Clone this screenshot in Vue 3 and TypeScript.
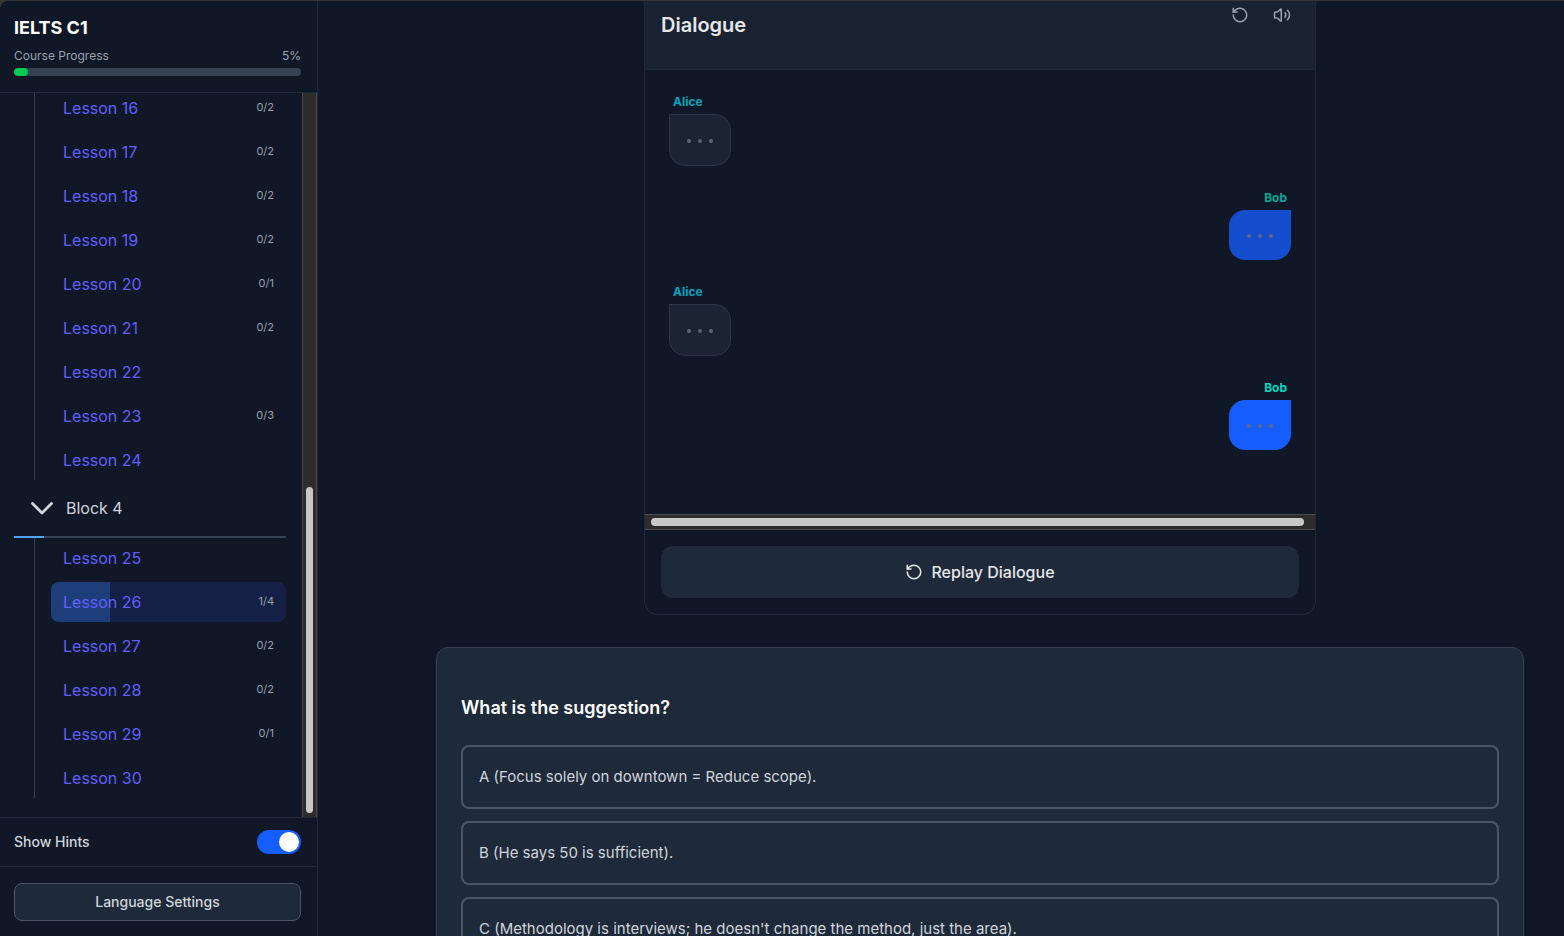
<script setup lang="ts">
import { ref } from 'vue'

interface Lesson {
  id: number
  count?: string
  progress?: number
}

interface Message {
  speaker: string
  own: boolean
  tone: string
}

const previousLessons: Lesson[] = [
  { id: 16, count: '0/2' },
  { id: 17, count: '0/2' },
  { id: 18, count: '0/2' },
  { id: 19, count: '0/2' },
  { id: 20, count: '0/1' },
  { id: 21, count: '0/2' },
  { id: 22 },
  { id: 23, count: '0/3' },
  { id: 24 },
]

const blockLessons: Lesson[] = [
  { id: 25 },
  { id: 26, count: '1/4', progress: 25 },
  { id: 27, count: '0/2' },
  { id: 28, count: '0/2' },
  { id: 29, count: '0/1' },
  { id: 30 },
]

const messages: Message[] = [
  { speaker: 'Alice', own: false, tone: 'alice' },
  { speaker: 'Bob', own: true, tone: 'bob muted' },
  { speaker: 'Alice', own: false, tone: 'alice' },
  { speaker: 'Bob', own: true, tone: 'bob' },
]

const options: string[] = [
  'A (Focus solely on downtown = Reduce scope).',
  'B (He says 50 is sufficient).',
  "C (Methodology is interviews; he doesn't change the method, just the area).",
]

const courseProgress = ref(5)
const blockProgress = ref(11)
const showHints = ref(true)
const open = ref(true)
</script>

<template>
  <div class="app">
    <aside class="sidebar">
      <header class="course">
        <h1>IELTS C1</h1>
        <div class="course-row">
          <span>Course Progress</span>
          <span>{{ courseProgress }}%</span>
        </div>
        <div class="course-track">
          <div class="course-fill" :style="{ width: courseProgress + '%' }"></div>
        </div>
      </header>

      <div class="list-area">
        <nav class="list" aria-label="Lessons">
          <div class="list-inner">
            <div class="group">
              <a v-for="l in previousLessons" :key="l.id" href="#" class="lesson">
                <span class="lesson-name">Lesson {{ l.id }}</span>
                <span v-if="l.count" class="count">{{ l.count }}</span>
              </a>
            </div>
            <button type="button" class="block" :aria-expanded="open" @click="open = !open">
              <svg width="24" height="24" viewBox="0 0 24 24" fill="none" stroke="currentColor" stroke-width="2.8" stroke-linecap="round" stroke-linejoin="round">
                <path d="M2.500 7.500 12 17l9.500-9.500" />
              </svg>
              <span>Block 4</span>
            </button>
            <div class="block-track">
              <div class="block-fill" :style="{ width: blockProgress + '%' }"></div>
            </div>
            <div v-show="open" class="group">
              <a v-for="l in blockLessons" :key="l.id" href="#" class="lesson" :class="{ current: l.progress }">
                <span v-if="l.progress" class="lesson-fill" :style="{ width: l.progress + '%' }"></span>
                <span class="lesson-name">Lesson {{ l.id }}</span>
                <span v-if="l.count" class="count">{{ l.count }}</span>
              </a>
            </div>
          </div>
        </nav>
        <div class="v-track"><div class="v-space"></div><div class="v-thumb"></div></div>
      </div>

      <div class="hints">
        <label for="hints">Show Hints</label>
        <input id="hints" v-model="showHints" type="checkbox" role="switch" class="switch" />
      </div>
      <div class="language">
        <button type="button" class="language-button">Language Settings</button>
      </div>
    </aside>

    <main class="main">
      <section class="dialogue">
        <header class="dialogue-head">
          <h2>Dialogue</h2>
          <div class="tools">
            <button type="button" class="tool" aria-label="Replay">
              <svg width="18" height="18" viewBox="0 0 24 24" fill="none" stroke="currentColor" stroke-width="2" stroke-linecap="round" stroke-linejoin="round">
                <path d="M3 12a9 9 0 1 0 9-9 9.75 9.75 0 0 0-6.74 2.74L3 8" />
                <path d="M3 3v5h5" />
              </svg>
            </button>
            <button type="button" class="tool" aria-label="Sound">
              <svg width="18" height="18" viewBox="0 0 24 24" fill="none" stroke="currentColor" stroke-width="2" stroke-linecap="round" stroke-linejoin="round">
                <path d="M11 4.7a.7.7 0 0 0-1.2-.5L6.4 7.6A1.4 1.4 0 0 1 5.4 8H3a1 1 0 0 0-1 1v6a1 1 0 0 0 1 1h2.4a1.4 1.4 0 0 1 1 .4l3.4 3.4a.7.7 0 0 0 1.2-.5z" />
                <path d="M16 9a5 5 0 0 1 0 6" />
                <path d="M19.4 18.400a9 9 0 0 0 0-12.700" />
              </svg>
            </button>
          </div>
        </header>
        <div class="messages">
          <div v-for="(m, i) in messages" :key="i" class="message" :class="[m.tone, { own: m.own }]">
            <span class="speaker">{{ m.speaker }}</span>
            <div class="bubble"><i></i><i></i><i></i></div>
          </div>
        </div>
        <div class="h-track"><div class="h-thumb"></div></div>
        <footer class="dialogue-foot">
          <button type="button" class="replay">
            <svg width="18" height="18" viewBox="0 0 24 24" fill="none" stroke="currentColor" stroke-width="2" stroke-linecap="round" stroke-linejoin="round">
              <path d="M3 12a9 9 0 1 0 9-9 9.75 9.75 0 0 0-6.74 2.74L3 8" />
              <path d="M3 3v5h5" />
            </svg>
            <span>Replay Dialogue</span>
          </button>
        </footer>
      </section>

      <section class="question">
        <h3>What is the suggestion?</h3>
        <div class="options">
          <button v-for="o in options" :key="o" type="button" class="option">{{ o }}</button>
        </div>
      </section>
    </main>
  </div>
</template>

<style>
body {
  margin: 0;
  background: #3a3a3c;
}
</style>

<style scoped>
* {
  box-sizing: border-box;
}
.app {
  display: flex;
  height: 100vh;
  overflow: hidden;
  border-top: 1px solid #363638;
  border-radius: 8px 0 0 0;
  background: #101726;
  color: #d1d5dc;
  font-family: Inter, "Liberation Sans", sans-serif;
  font-size: 16px;
  line-height: 24px;
}
h1, h2, h3 {
  margin: 0;
}
button {
  font: inherit;
  color: inherit;
  border: 0;
  background: none;
  padding: 0;
  cursor: pointer;
}
svg {
  display: block;
  flex: none;
}
.sidebar {
  display: flex;
  flex-direction: column;
  flex: none;
  width: 318px;
  border-right: 1px solid #1e2939;
}
.course {
  padding: 13px 16px 16px 14px;
  border-bottom: 1px solid #1e2939;
}
.course h1 {
  font-size: 18px;
  line-height: 28px;
  font-weight: 700;
  color: #fff;
}
.course-row {
  display: flex;
  justify-content: space-between;
  margin: 6px 0 4px;
  font-size: 12px;
  line-height: 16px;
  color: #99a1af;
}
.course-track {
  height: 8px;
  border-radius: 4px;
  background: #364153;
  overflow: hidden;
}
.course-fill {
  height: 100%;
  border-radius: 4px;
  background: #00c950;
}
.list-area {
  display: flex;
  flex: 1;
  min-height: 0;
}
.list {
  display: flex;
  flex-direction: column-reverse;
  flex: 1;
  min-width: 0;
  overflow-y: auto;
  scrollbar-width: none;
}
.list-inner {
  flex: none;
  padding: 0 16px 19px 14px;
}
.group {
  display: flex;
  flex-direction: column;
  gap: 4px;
  margin-left: 20px;
  padding-left: 16px;
  border-left: 1px solid #364153;
}
.lesson {
  position: relative;
  display: flex;
  align-items: center;
  justify-content: space-between;
  height: 40px;
  padding: 0 12px;
  border-radius: 8px;
  overflow: hidden;
  color: #625fff;
  text-decoration: none;
}
.lesson.current {
  background: #142045;
}
.lesson-fill {
  position: absolute;
  inset: 0 auto 0 0;
  background: #1e3e7b;
}
.lesson-name {
  position: relative;
}
.count {
  padding-bottom: 2px;
  font-size: 11px;
  line-height: 16px;
  color: #99a1af;
}
.block {
  display: flex;
  align-items: center;
  gap: 12px;
  width: 100%;
  height: 40px;
  margin: 8px 0;
  padding: 0 16px;
  color: #d1d5dc;
}
.block-track {
  height: 2px;
  background: #364153;
}
.block-fill {
  height: 100%;
  background: #51a2ff;
}
.v-track {
  display: flex;
  flex-direction: column;
  width: 15px;
  padding: 3px 3px 4px;
  border: solid #4b4b4b;
  border-width: 0 1px;
  background: #2c2c2c;
}
.v-space {
  flex: 391;
}
.v-thumb {
  flex: 326;
  width: 7px;
  border-radius: 4px;
  background: #c8c8c8;
}
.hints {
  display: flex;
  align-items: center;
  justify-content: space-between;
  height: 49px;
  padding: 0 16px 0 14px;
  border-top: 1px solid #1e2939;
  font-size: 14px;
  line-height: 20px;
  font-weight: 500;
}
.switch {
  appearance: none;
  display: flex;
  align-items: center;
  width: 44px;
  height: 24px;
  margin: 0;
  padding: 2px;
  border-radius: 12px;
  background: #4a5565;
  cursor: pointer;
}
.switch::before {
  content: "";
  width: 20px;
  height: 20px;
  border-radius: 50%;
  background: #fff;
}
.switch:checked {
  justify-content: flex-end;
  background: #155dfc;
}
.language {
  padding: 16px 16px 15px 14px;
  border-top: 1px solid #1e2939;
}
.language-button {
  width: 100%;
  height: 38px;
  border: 1px solid #4a5565;
  border-radius: 8px;
  background: #1e2939;
  font-size: 14px;
  line-height: 20px;
  font-weight: 500;
}
.main {
  flex: 1;
  min-width: 0;
  padding: 0 40px 0 118px;
  overflow: hidden;
}
.dialogue {
  max-width: 672px;
  margin: 0 auto 32px;
  border: solid #1e2939;
  border-width: 0 1px 1px;
  border-radius: 0 0 14px 14px;
}
.dialogue-head {
  display: flex;
  justify-content: space-between;
  align-items: flex-start;
  height: 69px;
  padding: 0 16px;
  border-bottom: 1px solid #1e2939;
  background: #192231;
}
.dialogue-head h2 {
  padding-top: 10px;
  font-size: 20px;
  line-height: 28px;
  font-weight: 600;
  color: #e5e7eb;
}
.tools {
  display: flex;
  gap: 8px;
}
.tool {
  padding: 5px 8px 8px;
  color: #99a1af;
}
.messages {
  display: flex;
  flex-direction: column;
  gap: 24px;
  padding: 24px 24px 64px;
}
.message {
  display: flex;
  flex-direction: column;
  align-items: flex-start;
  gap: 4px;
}
.message.own {
  align-items: flex-end;
}
.speaker {
  padding: 0 4px;
  font-size: 12px;
  line-height: 16px;
  font-weight: 700;
  color: #04a3bd;
}
.bob .speaker {
  color: #00d5be;
}
.bob.muted .speaker {
  color: #05a697;
}
.bubble {
  display: flex;
  gap: 7px;
  padding: 24px 17px 22px;
  border: 1px solid #2b3648;
  border-radius: 0 16px 16px 16px;
  background: #1b2433;
}
.bob .bubble {
  padding: 24px 18px 22px;
  border: 0;
  border-radius: 16px 0 16px 16px;
  background: #155dfc;
}
.bob.muted .bubble {
  background: #144dce;
}
.bubble i {
  width: 4px;
  height: 4px;
  border-radius: 50%;
  background: #5a6372;
}
.bob .bubble i {
  background: #5c6880;
}
.h-track {
  padding: 3px 11px 3px 6px;
  border: solid #4b4b4b;
  border-width: 1px 0;
  background: #2c2c2c;
}
.h-thumb {
  height: 8px;
  border-radius: 4px;
  background: #c8c8c8;
}
.dialogue-foot {
  padding: 16px;
}
.replay {
  display: flex;
  align-items: center;
  justify-content: center;
  gap: 8px;
  width: 100%;
  height: 52px;
  border-radius: 12px;
  background: #1e2939;
  color: #e5e7eb;
  font-weight: 500;
}
.question {
  padding: 46px 24px 24px;
  border: 1px solid #364153;
  border-radius: 12px;
  background: #1e2939;
}
.question h3 {
  font-size: 18px;
  line-height: 28px;
  font-weight: 600;
  color: #fff;
}
.options {
  display: flex;
  flex-direction: column;
  gap: 12px;
  margin-top: 23px;
}
.option {
  min-height: 64px;
  padding: 0 16px;
  border: 2px solid #4a5565;
  border-radius: 8px;
  font-size: 15px;
  text-align: left;
}
</style>
